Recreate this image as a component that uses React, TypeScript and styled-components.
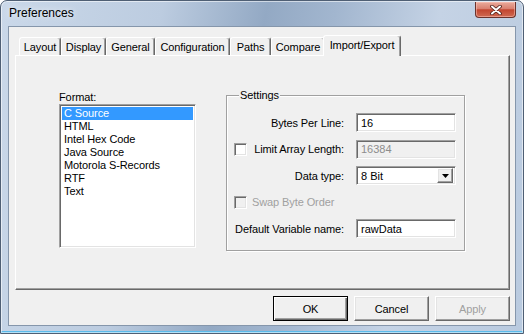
import React, { useState } from 'react';
import styled, { createGlobalStyle, css } from 'styled-components';

const GlobalStyle = createGlobalStyle`
	html, body {
		margin: 0;
		padding: 0;
		background: #fff;
	}
	body {
		width: 524px;
		height: 334px;
		overflow: hidden;
		font-family: "Liberation Sans", Arial, sans-serif;
		font-size: 11px;
		color: #000;
	}
	* {
		box-sizing: border-box;
	}
`;

const sunken = css`
	border: 1px solid;
	border-color: #a0a0a0 #fff #fff #a0a0a0;
	box-shadow: inset 1px 1px 0 #696969, inset -1px -1px 0 #e3e3e3;
`;

const raised = css`
	border: 1px solid;
	border-color: #fff #696969 #696969 #fff;
	box-shadow: inset -1px -1px 0 #a0a0a0, inset 1px 1px 0 #e3e3e3;
`;

const Window = styled.div`
	width: 524px;
	height: 334px;
	display: flex;
	flex-direction: column;
	border: 1px solid #4f5f74;
	border-radius: 7px 7px 0 0;
	background: linear-gradient(
		100deg,
		#cad8e9 0%,
		#bccce0 28%,
		#93a9c4 46%,
		#a2b6cf 58%,
		#c5d3e5 76%,
		#b9cadf 100%
	);
	box-shadow: inset 0 0 0 1px rgba(255, 255, 255, 0.55), inset 0 -2px 0 #5bbbeb;
`;

const TitleBar = styled.div`
	height: 25px;
	display: flex;
	justify-content: space-between;
	align-items: flex-start;
	padding-left: 8px;
`;

const Title = styled.span`
	font-size: 12px;
	line-height: 25px;
	color: #000;
	text-shadow: 0 0 6px rgba(255, 255, 255, 0.9);
`;

const CloseButton = styled.div`
	width: 41px;
	height: 16px;
	margin: 1px 7px 0 0;
	display: flex;
	align-items: center;
	justify-content: center;
	border: 1px solid #6b322b;
	border-top: none;
	border-radius: 0 0 4px 4px;
	background: linear-gradient(#e9ab9c 0%, #d98070 45%, #c2452f 52%, #cf6a52 100%);
	box-shadow: inset 0 0 0 1px rgba(255, 200, 190, 0.5);
`;

const Client = styled.div`
	flex: 1;
	margin: 0 7px 7px;
	border: 1px solid #8596ab;
	background: #f0f0f0;
	display: flex;
	flex-direction: column;
	padding: 8px 5px 4px 6px;
`;

const TabStrip = styled.div`
	height: 20px;
	display: flex;
	align-items: flex-end;
	padding-left: 4px;
`;

const Tab = styled.div<{ $w: number; $active?: boolean }>`
	width: ${(p) => p.$w}px;
	height: 18px;
	display: flex;
	justify-content: center;
	align-items: center;
	background: #f0f0f0;
	border: 1px solid;
	border-bottom: none;
	border-color: #fff #696969 transparent #fff;
	border-radius: 3px 3px 0 0;
	box-shadow: inset -1px 0 0 #a0a0a0;
	white-space: nowrap;
	letter-spacing: -0.1px;
	padding-top: 1px;
	${(p) =>
		p.$active &&
		css`
			width: ${p.$w + 4}px;
			height: 21px;
			margin: 0 -2px -1px;
			position: relative;
			z-index: 2;
			padding-top: 0;
			padding-bottom: 3px;
		`}
`;

const Panel = styled.div`
	height: 235px;
	display: flex;
	align-items: flex-start;
	padding: 35px 0 0 43px;
	border: 1px solid;
	border-color: #fff #696969 #696969 #fff;
	box-shadow: inset -1px -1px 0 #a0a0a0;
	position: relative;
	z-index: 1;
`;

const FormatColumn = styled.div`
	width: 137px;
	display: flex;
	flex-direction: column;
`;

const Caption = styled.div`
	line-height: 13px;
	letter-spacing: -0.1px;
`;

const ListBox = styled.ul`
	${sunken};
	list-style: none;
	margin: 0;
	height: 144px;
	padding: 2px;
	background: #fff;
`;

const ListItem = styled.li<{ $selected?: boolean }>`
	line-height: 13px;
	padding-left: 2px;
	white-space: nowrap;
	letter-spacing: -0.1px;
	${(p) =>
		p.$selected &&
		css`
			background: #3399ff;
			color: #fff;
		`}
`;

const GroupBox = styled.fieldset`
	width: 239px;
	height: 162px;
	margin: -2px 0 0 30px;
	padding: 11px 0 0 7px;
	border: 1px solid #a0a0a0;
	box-shadow: 1px 1px 0 #fff, inset 1px 1px 0 #fff;
	min-width: 0;
`;

const Legend = styled.legend`
	margin-left: 5px;
	padding: 0 1px;
	line-height: 13px;
	background: #f0f0f0;
	letter-spacing: -0.1px;
`;

const FieldGrid = styled.div`
	display: grid;
	grid-template-columns: 110px 100px;
	grid-template-rows: repeat(5, 19px);
	column-gap: 12px;
	row-gap: 7.5px;
`;

const FieldLabel = styled.label<{ $disabled?: boolean; $span?: boolean }>`
	display: flex;
	align-items: center;
	justify-content: ${(p) => (p.$span ? 'flex-start' : 'flex-end')};
	gap: 5px;
	white-space: nowrap;
	letter-spacing: -0.1px;
	color: ${(p) => (p.$disabled ? '#a0a0a0' : '#000')};
	${(p) =>
		p.$span &&
		css`
			grid-column: 1 / span 2;
		`}
`;

const CheckLabel = styled(FieldLabel)`
	justify-content: space-between;
`;

const CheckBox = styled.span<{ $disabled?: boolean }>`
	${sunken};
	width: 13px;
	height: 13px;
	flex: none;
	background: ${(p) => (p.$disabled ? '#f0f0f0' : '#fff')};
`;

const TextField = styled.input`
	${sunken};
	width: 100px;
	height: 19px;
	padding: 0 0 0 4px;
	font-family: inherit;
	font-size: 11px;
	color: #000;
	background: #fff;
	outline: none;

	&:disabled {
		background: #f0f0f0;
		color: #8d8d8d;
	}
`;

const Dropdown = styled.div`
	${sunken};
	width: 100px;
	height: 19px;
	display: flex;
	align-items: center;
	justify-content: space-between;
	padding: 2px 2px 2px 4px;
	background: #fff;
`;

const DropButton = styled.span`
	${raised};
	width: 16px;
	height: 15px;
	display: flex;
	align-items: center;
	justify-content: center;
	background: #f0f0f0;
`;

const ButtonRow = styled.div`
	display: flex;
	justify-content: flex-end;
	gap: 6px;
	margin-top: 6px;
	padding-right: 0;
`;

const Button = styled.button<{ $default?: boolean }>`
	${raised};
	width: 75px;
	height: 25px;
	padding: 0;
	background: #f0f0f0;
	font-family: inherit;
	font-size: 11px;
	color: #000;
	letter-spacing: -0.1px;

	&:disabled {
		color: #a0a0a0;
	}

	${(p) =>
		p.$default &&
		css`
			border-color: #000;
			box-shadow: inset 1px 1px 0 #fff, inset -1px -1px 0 #696969,
				inset -2px -2px 0 #a0a0a0;
		`}
`;

const tabs = [
	{ name: 'Layout', w: 42 },
	{ name: 'Display', w: 45 },
	{ name: 'General', w: 49 },
	{ name: 'Configuration', w: 75 },
	{ name: 'Paths', w: 41 },
	{ name: 'Compare', w: 54 },
	{ name: 'Import/Export', w: 74 },
];

const formats = [
	'C Source',
	'HTML',
	'Intel Hex Code',
	'Java Source',
	'Motorola S-Records',
	'RTF',
	'Text',
];

const App: React.FC = () => {
	const [activeTab, setActiveTab] = useState('Import/Export');
	const [format, setFormat] = useState('C Source');
	const [bytesPerLine, setBytesPerLine] = useState('16');
	const [varName, setVarName] = useState('rawData');

	return (
		<>
			<GlobalStyle />
			<Window>
				<TitleBar>
					<Title>Preferences</Title>
					<CloseButton>
						<svg width='12' height='10' viewBox='0 0 12 10'>
							<path d='M2 1.5 L10 8.5 M10 1.5 L2 8.5' stroke='#4b1d17' strokeWidth='3.6' strokeLinecap='round' />
							<path d='M2 1.5 L10 8.5 M10 1.5 L2 8.5' stroke='#fff' strokeWidth='2' strokeLinecap='round' />
						</svg>
					</CloseButton>
				</TitleBar>
				<Client>
					<TabStrip>
						{tabs.map((t) => (
							<Tab
								key={t.name}
								$w={t.w}
								$active={t.name === activeTab}
								onClick={() => setActiveTab(t.name)}>
								{t.name}
							</Tab>
						))}
					</TabStrip>
					<Panel>
						<FormatColumn>
							<Caption>Format:</Caption>
							<ListBox>
								{formats.map((f) => (
									<ListItem key={f} $selected={f === format} onClick={() => setFormat(f)}>
										{f}
									</ListItem>
								))}
							</ListBox>
						</FormatColumn>
						<GroupBox>
							<Legend>Settings</Legend>
							<FieldGrid>
								<FieldLabel htmlFor='bytes'>Bytes Per Line:</FieldLabel>
								<TextField
									id='bytes'
									value={bytesPerLine}
									onChange={(e) => setBytesPerLine(e.target.value)}
								/>
								<CheckLabel>
									<CheckBox />
									Limit Array Length:
								</CheckLabel>
								<TextField value='16384' disabled readOnly />
								<FieldLabel>Data type:</FieldLabel>
								<Dropdown>
									<span>8 Bit</span>
									<DropButton>
										<svg width='7' height='4' viewBox='0 0 7 4'>
											<path d='M0 0 H7 L3.5 4 Z' fill='#000' />
										</svg>
									</DropButton>
								</Dropdown>
								<FieldLabel $span $disabled>
									<CheckBox $disabled />
									Swap Byte Order
								</FieldLabel>
								<FieldLabel htmlFor='varname'>Default Variable name:</FieldLabel>
								<TextField
									id='varname'
									value={varName}
									onChange={(e) => setVarName(e.target.value)}
								/>
							</FieldGrid>
						</GroupBox>
					</Panel>
					<ButtonRow>
						<Button $default>OK</Button>
						<Button>Cancel</Button>
						<Button disabled>Apply</Button>
					</ButtonRow>
				</Client>
			</Window>
		</>
	);
};

export default App;
